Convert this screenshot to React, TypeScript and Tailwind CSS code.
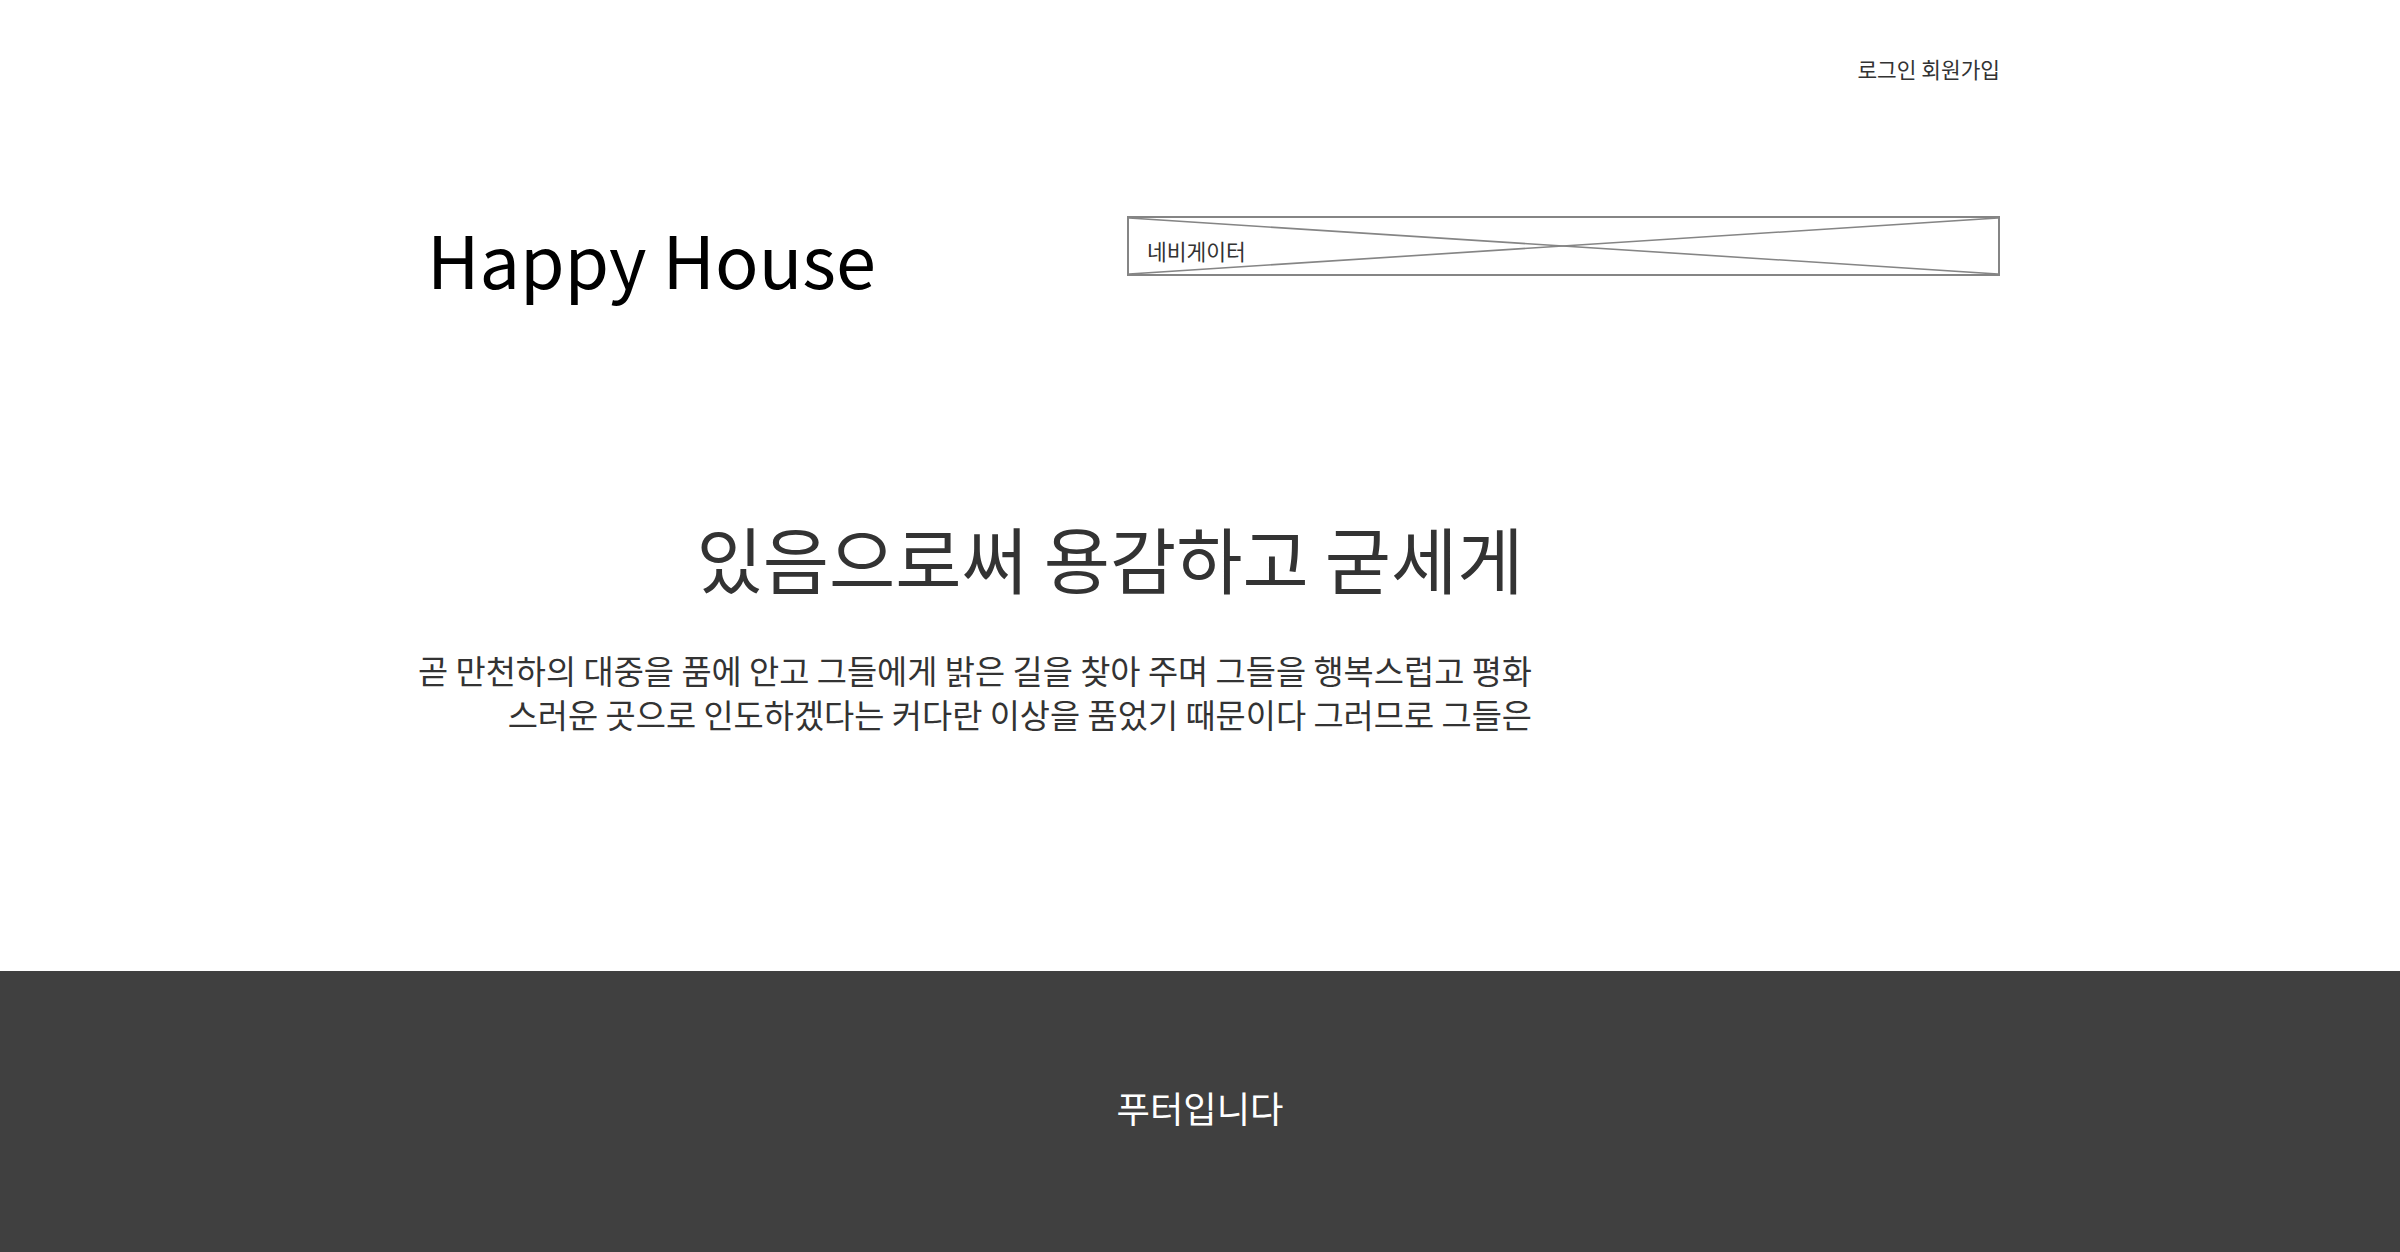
import React from "react";

const FONT = '"Noto Sans CJK KR", "Noto Sans", sans-serif';

function NavPlaceholder() {
  return (
    <div className="relative flex h-[60px] w-[873px] items-center border-2 border-[#858585] pl-[18px] pt-[10px]">
      {/* X placeholder lines */}
      <svg
        className="pointer-events-none absolute inset-0 h-full w-full"
        viewBox="0 0 100 100"
        preserveAspectRatio="none"
      >
        <line x1="0" y1="0" x2="100" y2="100" stroke="#858585" strokeWidth="1.6" vectorEffect="non-scaling-stroke" />
        <line x1="100" y1="0" x2="0" y2="100" stroke="#858585" strokeWidth="1.6" vectorEffect="non-scaling-stroke" />
      </svg>
      <span className="relative text-[21.5px] leading-[30px] text-[#333]">네비게이터</span>
    </div>
  );
}

export default function App() {
  return (
    <div className="flex min-h-screen flex-col bg-white" style={{ fontFamily: FONT }}>
      <div className="mx-auto w-[1600px]">
        {/* top links */}
        <div className="flex justify-end pt-[54px] text-[21.4px] leading-[30px] text-[#333]">
          <a href="#">로그인</a>
          <span>&nbsp;</span>
          <a href="#">회원가입</a>
        </div>

        {/* logo + navigator */}
        <div className="mt-[132px] flex items-start justify-between">
          <h1 className="flex h-[80px] items-center pl-[27px] pt-[3px] text-[72px] leading-[80px] text-black">Happy House</h1>
          <NavPlaceholder />
        </div>

        {/* hero */}
        <section className="mt-[211px] w-[1132px] pb-[235px]">
          <h2 className="pl-[288px] text-center text-[72px] leading-[1.4] text-[#333]">
            있음으로써 용감하고 굳세게
          </h2>
          <p className="mt-[40px] text-right text-[32.8px] leading-[44px] text-[#333]">
            곧 만천하의 대중을 품에 안고 그들에게 밝은 길을 찾아 주며 그들을 행복스럽고 평화
            <br />
            스러운 곳으로 인도하겠다는 커다란 이상을 품었기 때문이다 그러므로 그들은
          </p>
        </section>
      </div>

      <footer className="flex h-[283px] items-center justify-center bg-[#404040] pb-[10px]">
        <p className="text-[36.3px] text-white">푸터입니다</p>
      </footer>
    </div>
  );
}
